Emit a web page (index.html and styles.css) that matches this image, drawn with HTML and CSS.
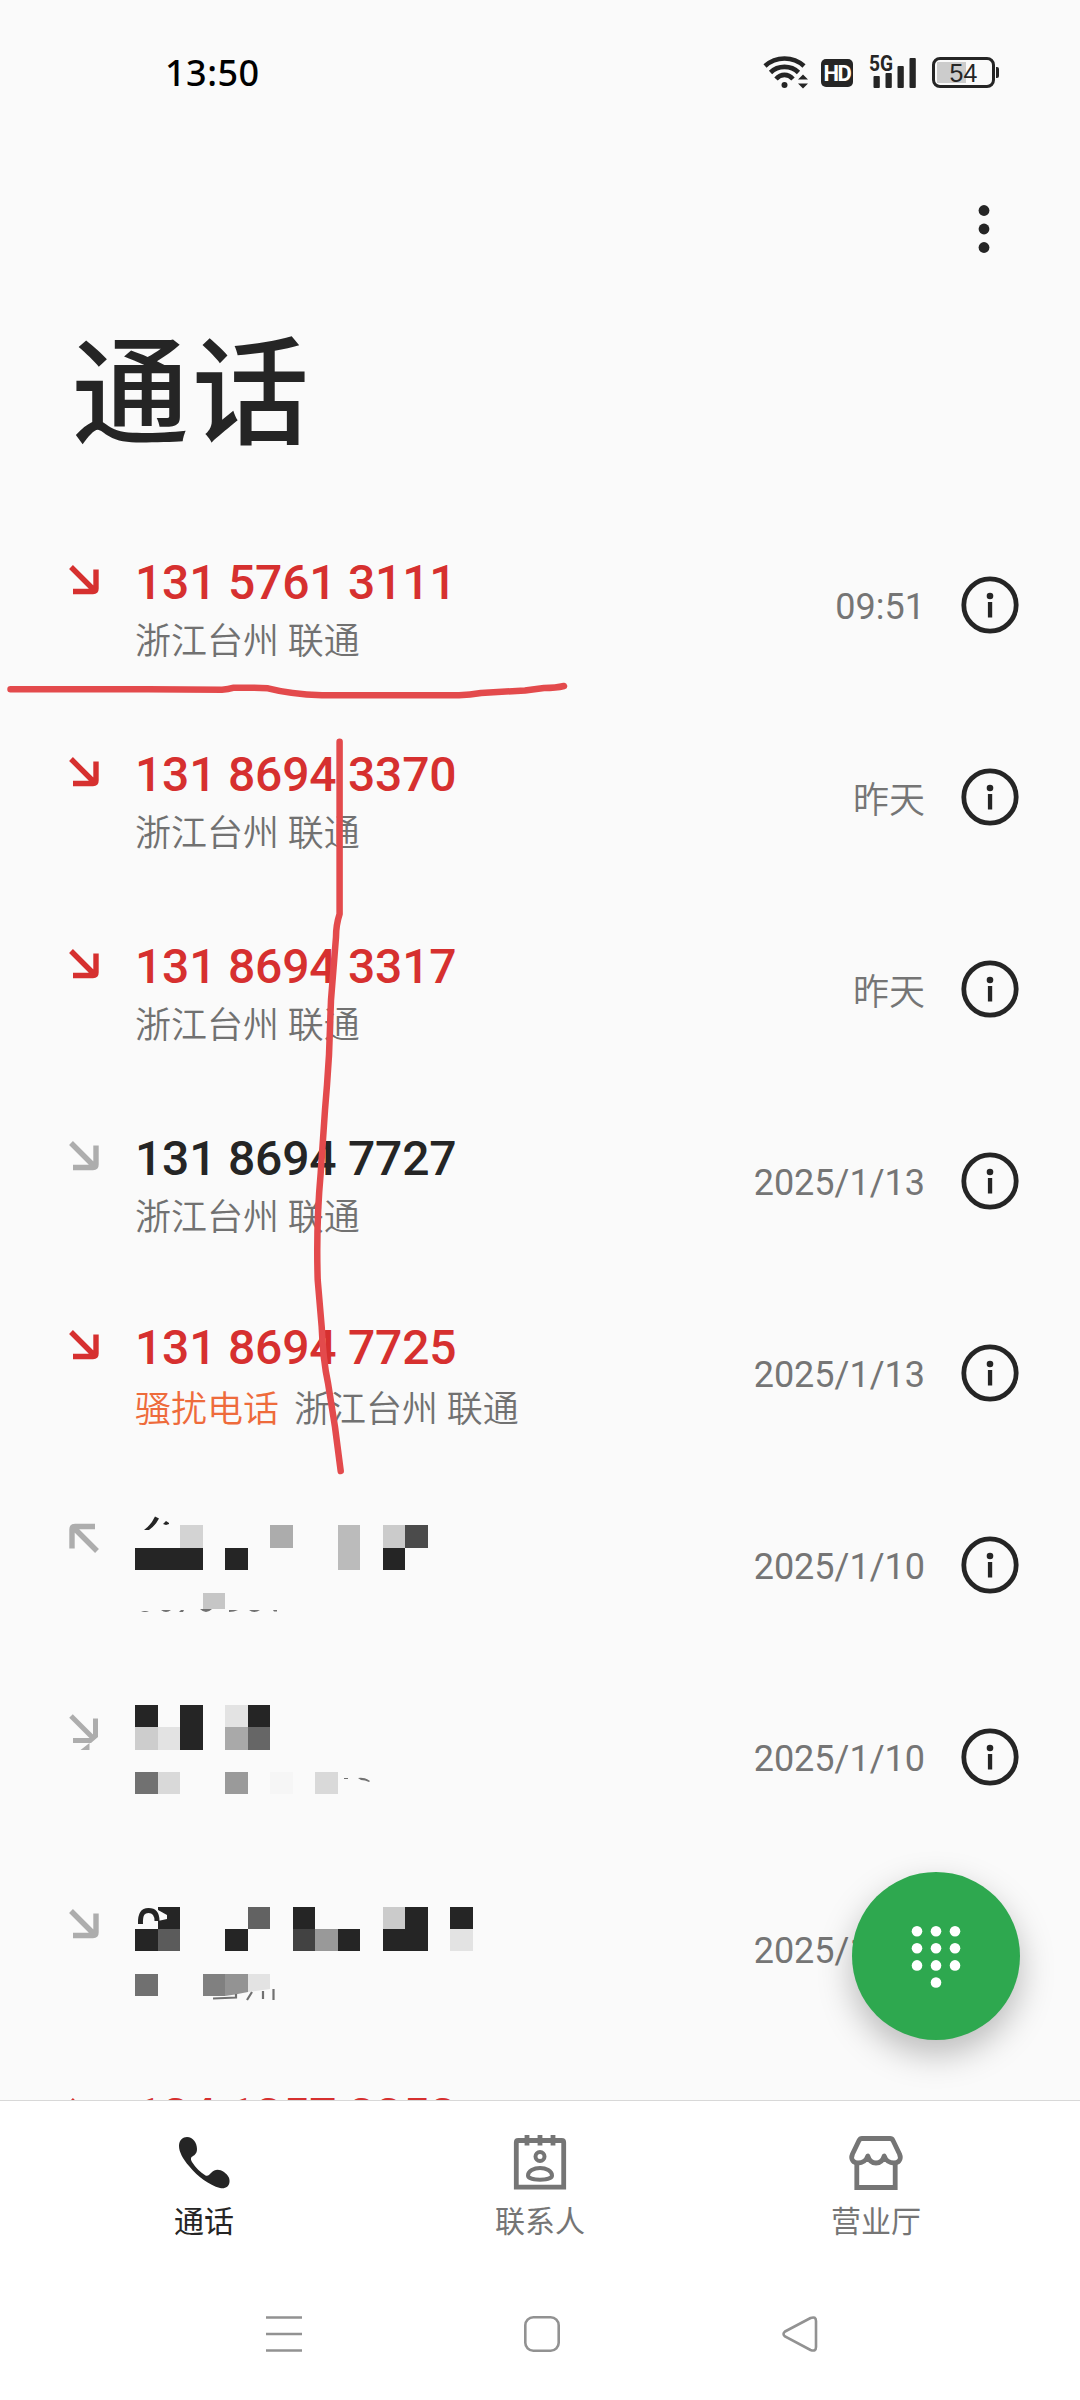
FILE: index.html
```html
<!DOCTYPE html>
<html lang="zh-CN">
<head>
    <meta charset="UTF-8">
    <meta name="viewport" content="width=device-width, initial-scale=1.0">
    <title>通话</title>
    <link rel="stylesheet" href="styles.css">
</head>
<body>
    <!-- shared icons -->
    <svg class="defs" width="0" height="0">
        <symbol id="arrow" viewBox="0 0 30 30">
            <path d="M2 2 L25 25 M4 26.5 H24 Q27 26.5 27 23.5 V4.5" fill="none" stroke="currentColor" stroke-width="5.4"/>
        </symbol>
        <symbol id="info" viewBox="0 0 58 58">
            <circle cx="29" cy="29" r="26.2" fill="none" stroke="currentColor" stroke-width="4.8"/>
            <circle cx="29" cy="20" r="3.3" fill="currentColor"/>
            <rect x="26.900" y="26" width="4.300" height="15.500" fill="currentColor"/>
        </symbol>
    </svg>

    <div class="status-bar">
        <span class="clock">13:50</span>
        <div class="status-icons">
            <svg class="wifi" width="46" height="36" viewBox="0 0 46 36" fill="none" stroke="#252525" stroke-width="4.6">
                <path d="M2 12 C13 2 30 2 41 12"/>
                <path d="M7.5 18.500 C15 11 28 11 35.5 18.500"/>
                <path d="M13 25 C18 19.500 25 19.500 30 25"/>
                <circle cx="21.5" cy="31" r="3" fill="#252525" stroke="none"/>
                <path d="M40 20.5 L45 25.5 H35 Z M40 34.5 L45 29.5 H35 Z" fill="#252525" stroke="none"/>
            </svg>
            <span class="hd">HD</span>
            <div class="signal">
                <span class="net">5G</span>
                <svg width="48" height="34" viewBox="0 0 48 34" fill="#252525">
                    <rect x="4.5" y="21" width="6.3" height="12" rx="1"/>
                    <rect x="16.5" y="18" width="6.3" height="15" rx="1"/>
                    <rect x="28.5" y="11" width="6.3" height="22" rx="1"/>
                    <rect x="40.5" y="3" width="6.3" height="30" rx="1"/>
                </svg>
            </div>
            <div class="battery"><span>54</span></div>
        </div>
    </div>

    <div class="toolbar">
        <svg width="12" height="50" viewBox="0 0 12 50" fill="#252525">
            <circle cx="6" cy="6.5" r="5.4"/>
            <circle cx="6" cy="25" r="5.4"/>
            <circle cx="6" cy="43.5" r="5.4"/>
        </svg>
    </div>

    <h1>通话</h1>

    <div class="call-list">
        <div class="call missed">
            <svg class="arrow"><use href="#arrow"/></svg>
            <div class="who">
                <div class="number">131 5761 3111</div>
                <div class="place">浙江台州 联通</div>
            </div>
            <span class="time">09:51</span>
            <svg class="info"><use href="#info"/></svg>
        </div>
        <div class="call missed">
            <svg class="arrow"><use href="#arrow"/></svg>
            <div class="who">
                <div class="number">131 8694 3370</div>
                <div class="place">浙江台州 联通</div>
            </div>
            <span class="time day">昨天</span>
            <svg class="info"><use href="#info"/></svg>
        </div>
        <div class="call missed">
            <svg class="arrow"><use href="#arrow"/></svg>
            <div class="who">
                <div class="number">131 8694 3317</div>
                <div class="place">浙江台州 联通</div>
            </div>
            <span class="time day">昨天</span>
            <svg class="info"><use href="#info"/></svg>
        </div>
        <div class="call">
            <svg class="arrow"><use href="#arrow"/></svg>
            <div class="who">
                <div class="number">131 8694 7727</div>
                <div class="place">浙江台州 联通</div>
            </div>
            <span class="time">2025/1/13</span>
            <svg class="info"><use href="#info"/></svg>
        </div>
        <div class="call missed tagged">
            <svg class="arrow"><use href="#arrow"/></svg>
            <div class="who">
                <div class="number">131 8694 7725</div>
                <div class="place"><span class="tag">骚扰电话</span>浙江台州 联通</div>
            </div>
            <span class="time">2025/1/13</span>
            <svg class="info"><use href="#info"/></svg>
        </div>

        <!-- hidden contacts -->
        <div class="call outgoing">
            <svg class="arrow"><use href="#arrow"/></svg>
            <svg class="mosaic" viewBox="0 0 350 192" fill="#252525" shape-rendering="crispEdges">
                <rect x="45" y="56" width="23" height="23" fill="#d3d3d3"/>
                <rect x="0" y="79" width="68" height="22"/>
                <rect x="90" y="79" width="23" height="22"/>
                <rect x="135" y="56" width="23" height="23" fill="#acacac"/>
                <rect x="203" y="56" width="22" height="45" fill="#bbb"/>
                <rect x="248" y="56" width="22" height="23" fill="#cbcbcb"/>
                <rect x="270" y="56" width="23" height="23" fill="#4b4b4b"/>
                <rect x="248" y="79" width="22" height="22"/>
                <rect x="68" y="124" width="22" height="16" fill="#c6c6c6"/>
                <g shape-rendering="auto">
                    <path d="M9 61 Q16 56 20 47.500 L24 49.500 Q20 57 14 61 Z M28 55 L31 52 L34 54 L34 55 L31 56 Z"/>
                    <path d="M6 142 Q10 144 14 142 Z M26 141 Q31 145 36 141 Z M44 143 L46 141 H49 L48 143 Z M65 140 H77 Q71 146 65 140 Z M94 141 H103 Q99 143 94 143 Z M114 141 H125 Q119 145 114 141 Z M138 141 H142 V142.500 H139 Z" fill="#717171"/>
                </g>
            </svg>
            <span class="time">2025/1/10</span>
            <svg class="info"><use href="#info"/></svg>
        </div>
        <div class="call tagged">
            <svg class="arrow torn" viewBox="0 0 30 38">
                <path d="M2 2 L24 24 M4 26.5 H22 M26.500 4.500 V22" fill="none" stroke="currentColor" stroke-width="5"/>
                <path d="M11.500 36 L20.500 29 V36 Z M18 29 H22 L29 23 V20 H24 Z" fill="currentColor"/>
            </svg>
            <svg class="mosaic" viewBox="0 0 350 192" fill="#252525" shape-rendering="crispEdges">
                <rect x="0" y="44" width="23" height="22"/>
                <rect x="45" y="44" width="23" height="45"/>
                <rect x="0" y="66" width="23" height="23" fill="#cdcdcd"/>
                <rect x="23" y="66" width="22" height="23" fill="#e3e3e3"/>
                <rect x="90" y="44" width="23" height="22" fill="#e3e3e3"/>
                <rect x="113" y="44" width="22" height="22"/>
                <rect x="90" y="66" width="23" height="23" fill="#a9a9a9"/>
                <rect x="113" y="66" width="22" height="23" fill="#666"/>
                <rect x="0" y="111" width="23" height="22" fill="#717171"/>
                <rect x="23" y="111" width="22" height="22" fill="#d9d9d9"/>
                <rect x="90" y="111" width="23" height="22" fill="#9a9a9a"/>
                <rect x="135" y="111" width="23" height="22" fill="#f6f6f6"/>
                <rect x="180" y="111" width="23" height="22" fill="#d9d9d9"/>
                <path d="M209 117 H213 V118 H209 Z M223 117 Q230 116 235 120 L234 121 Q230 119 226 119 Z" fill="#717171" shape-rendering="auto"/>
            </svg>
            <span class="time">2025/1/10</span>
            <svg class="info"><use href="#info"/></svg>
        </div>
        <div class="call">
            <svg class="arrow"><use href="#arrow"/></svg>
            <svg class="mosaic" viewBox="0 0 350 192" fill="#252525" shape-rendering="crispEdges">
                <rect x="23" y="54" width="22" height="22"/>
                <rect x="0" y="76" width="23" height="22"/>
                <rect x="23" y="76" width="22" height="22" fill="#5b5b5b"/>
                <rect x="113" y="54" width="22" height="22" fill="#626262"/>
                <rect x="90" y="76" width="23" height="22"/>
                <rect x="158" y="54" width="22" height="22"/>
                <rect x="158" y="76" width="22" height="22" fill="#424242"/>
                <rect x="180" y="76" width="23" height="22" fill="#999"/>
                <rect x="203" y="76" width="22" height="22"/>
                <rect x="248" y="54" width="22" height="22" fill="#cbcbcb"/>
                <rect x="270" y="54" width="23" height="22"/>
                <rect x="248" y="76" width="45" height="22"/>
                <rect x="315" y="54" width="23" height="22"/>
                <rect x="315" y="76" width="23" height="22" fill="#e3e3e3"/>
                <rect x="0" y="121" width="23" height="22" fill="#707070"/>
                <rect x="68" y="121" width="22" height="22" fill="#808080"/>
                <g shape-rendering="auto">
                    <path d="M23 57 L32 62 V66 L23 68 Z" fill="#fafafa"/>
                    <path d="M5.500 71 C5 61 8 57.500 13.500 57.500 C19 57.500 22 61 22 68" fill="none" stroke="#252525" stroke-width="5"/>
                    <path d="M90 121 H113 V139 L100 141.500 L90 143 Z" fill="#939393"/>
                    <path d="M113 121 H135 V136 L113 139 Z" fill="#e3e3e3"/>
                    <path d="M78 145.500 L101 144.500 V141 M117 139 L112 147 M128 138 V146 M138.500 136 V147" fill="none" stroke="#717171" stroke-width="2.200"/>
                </g>
            </svg>
            <span class="time">2025/1/10</span>
            <svg class="info"><use href="#info"/></svg>
        </div>
        <div class="call missed tagged">
            <svg class="arrow"><use href="#arrow"/></svg>
            <div class="who">
                <div class="number">134 1357 3353</div>
            </div>
        </div>
    </div>

    <div class="tabs">
        <div class="tab active">
            <svg width="60" height="60" viewBox="0 0 60 60" fill="currentColor">
                <path d="M5 13 C5 7 9 4 13 4 C19 4 23 10 23 16 C23 21 20 22.500 17.500 24 C16.500 26 17 27 18 29 C22 35 26 39 31.500 42.500 C34 43.500 35 42 37 40 C41 36 45 36 50 39 C54 42 56 45 55.500 49 C55 54 51 56 46 55 C35 52 24 44 15 33 C9 26 5 19 5 13 Z"/>
            </svg>
            <span>通话</span>
        </div>
        <div class="tab">
            <svg width="60" height="60" viewBox="0 0 60 60" fill="none" stroke="currentColor" stroke-width="4.800">
                <path d="M6.300 54.200 V9.500 Q6.300 7.500 8.300 7.500 H51.700 Q53.700 7.500 53.700 9.500 V54.200 Z"/>
                <path d="M17 2 V12.500 M30 2 V12.500 M43 2 V12.500"/>
                <circle cx="30" cy="23.500" r="4.500" stroke-width="4"/>
                <path d="M18 42.500 C18 38 24 35 30 35 C36 35 42 38 42 42.500 C42 48 18 48 18 42.500 Z" stroke-width="4"/>
            </svg>
            <span>联系人</span>
        </div>
        <div class="tab">
            <svg width="60" height="60" viewBox="0 0 60 60" fill="none" stroke="currentColor" stroke-width="4.800" stroke-linejoin="round">
                <path d="M16 5.500 H44 Q46 5.500 47 7.500 L53.500 21 C56 27 52 30 48 30 C43.500 30 39.500 27 38.200 23 C37 27 34 30 30 30 C26 30 23 27 21.800 23 C20.500 27 16.500 30 12 30 C8 30 4 27 6.500 21 L13 7.500 Q14 5.500 16 5.500 Z"/>
                <path d="M10.800 29 V54.500 H49.200 V29" stroke-linejoin="miter"/>
            </svg>
            <span>营业厅</span>
        </div>
    </div>

    <div class="system-nav">
        <svg viewBox="0 0 36 36"><path d="M0 1.500 H36 M0 18 H36 M0 34.500 H36"/></svg>
        <svg viewBox="0 0 36 36"><rect x="1.300" y="1.300" width="33.400" height="33.400" rx="8"/></svg>
        <svg viewBox="0 0 36 36"><path d="M3 15.500 L28.500 2 Q34 0 34 5 V31 Q34 36 28.500 34 L3 20.500 Q0 18 3 15.500 Z"/></svg>
    </div>

    <div class="fab">
        <svg width="60" height="70" viewBox="0 0 60 70" fill="#fff">
            <circle cx="11" cy="10.300" r="5.300"/><circle cx="30" cy="10.300" r="5.300"/><circle cx="49" cy="10.300" r="5.300"/>
            <circle cx="11" cy="27.300" r="5.300"/><circle cx="30" cy="27.300" r="5.300"/><circle cx="49" cy="27.300" r="5.300"/>
            <circle cx="11" cy="44.400" r="5.300"/><circle cx="30" cy="44.400" r="5.300"/><circle cx="49" cy="44.400" r="5.300"/>
            <circle cx="30" cy="61.500" r="5.300"/>
        </svg>
    </div>

    <!-- pen marks over the list -->
    <svg class="marks" width="1080" height="2400" viewBox="0 0 1080 2400">
        <path d="M10.500 689.300 H148 L222 689.700 Q228 689.500 234 687.700 H252 L268 688.300 Q290 694 322 695.300 H459 Q470 695 481 693 L525 690.500 L544 688 Q556 688 564 686"/>
        <path d="M339.600 741.700 V914 Q336 925 336 937 L331 1000 L329 1055 L327 1085 L325 1110 L320.700 1173 Q316 1225 317.700 1280 L321.700 1327 Q323 1360 328 1383 L335 1427 L340.700 1471"/>
    </svg>
</body>
</html>
```

FILE: styles.css
```css
* {
    margin: 0;
    padding: 0;
    box-sizing: border-box;
}

body {
    width: 1080px;
    height: 2400px;
    position: relative;
    display: flex;
    flex-direction: column;
    overflow: hidden;
    background-color: #fafafa;
    color: #252525;
    font-family: Roboto, "Noto Sans CJK SC", sans-serif;
}

svg {
    display: block;
    flex-shrink: 0;
}

.defs {
    position: absolute;
}

.status-bar {
    height: 144px;
    padding: 0 80px 0 165px;
    display: flex;
    justify-content: space-between;
    align-items: center;
}

.clock {
    font-family: "Noto Sans", sans-serif;
    font-size: 36px;
    font-weight: 500;
    letter-spacing: 0.5px;
    color: #000;
}

.status-icons {
    display: flex;
    align-items: center;
}

.wifi {
    margin-right: 12px;
}

.hd {
    width: 32px;
    height: 28px;
    margin: 2px 16px 0 0;
    border-radius: 5px;
    background-color: #252525;
    color: #fff;
    font-size: 22px;
    font-weight: 700;
    line-height: 29px;
    display: flex;
    justify-content: center;
    letter-spacing: -1.5px;
}

.signal {
    position: relative;
    margin-right: 15px;
}

.net {
    position: absolute;
    left: 0;
    top: -1px;
    font-size: 22px;
    font-weight: 700;
    line-height: 20px;
    transform: scaleX(0.87);
    transform-origin: left;
}

.battery {
    position: relative;
    width: 63px;
    height: 31px;
    margin-right: 5px;
    border: 3px solid #252525;
    border-radius: 8px;
    background: linear-gradient(#ccc, #ccc) 2px 2px / 29px 21px no-repeat;
    font-family: "Liberation Sans", sans-serif;
    font-size: 25px;
    line-height: 26px;
    text-align: center;
}

.battery::after {
    content: "";
    position: absolute;
    right: -7px;
    top: 7px;
    width: 3px;
    height: 11px;
    border-radius: 0 2px 2px 0;
    background-color: #252525;
}

.toolbar {
    height: 176px;
    padding: 60px 90px 0 0;
    display: flex;
    justify-content: flex-end;
}

h1 {
    height: 189px;
    padding-left: 72px;
    font-size: 117px;
    font-weight: 500;
    line-height: 150px;
    letter-spacing: 3px;
}

.call-list {
    height: 1591px;
    overflow: hidden;
}

.call {
    height: 192px;
    padding: 0 61px 0 69px;
    display: flex;
    align-items: center;
}

.arrow {
    width: 30px;
    height: 30px;
    align-self: flex-start;
    margin: 56px 36px 0 0;
    color: #adadad;
}

.arrow.torn {
    height: 38px;
}

.outgoing .arrow {
    transform: rotate(180deg);
    margin-top: 54px;
}

.missed .arrow,
.missed .number {
    color: #d6302f;
}

.who {
    flex: 1;
    align-self: flex-start;
    padding-top: 44px;
}

.number {
    height: 65px;
    font-size: 48px;
    font-weight: 500;
    line-height: 60px;
    letter-spacing: -0.2px;
}

.place {
    font-size: 36px;
    font-weight: 350;
    line-height: 48px;
    color: #717171;
}

.tag {
    margin-right: 15px;
    color: #ee6b3b;
}

.tagged .arrow {
    margin-top: 53px;
}

.tagged .who {
    padding-top: 41px;
}

.tagged .number {
    height: 68px;
}

.mosaic {
    width: 350px;
    height: 192px;
    margin: 0 auto 0 0;
}

.time {
    margin-right: 36px;
    padding-top: 3px;
    font-size: 36px;
    color: #757575;
}

.day {
    padding-top: 0;
    font-weight: 350;
}

.info {
    width: 58px;
    height: 58px;
}

.tabs {
    height: 170px;
    padding: 32px 36px 0;
    display: flex;
    border-top: 1px solid #d8d8d8;
    background-color: #fff;
}

.tab {
    flex: 1;
    display: flex;
    flex-direction: column;
    align-items: center;
    font-size: 30px;
    line-height: 40px;
    color: #757575;
}

.tab span {
    margin-top: 9px;
}

.tab.active {
    color: #252525;
}

.system-nav {
    flex: 1;
    padding: 46px 151px 0 155px;
    display: flex;
    justify-content: space-around;
    background-color: #fff;
}

.system-nav svg {
    width: 36px;
    height: 36px;
    fill: none;
    stroke: #929292;
    stroke-width: 2.6;
}

.fab {
    position: absolute;
    left: 852px;
    top: 1872px;
    width: 168px;
    height: 168px;
    display: flex;
    justify-content: center;
    padding-top: 49px;
    border-radius: 50%;
    background-color: #2ea84f;
    box-shadow: 0 14px 34px rgba(0, 0, 0, 0.26);
}

.marks {
    position: absolute;
    left: 0;
    top: 0;
    fill: none;
    stroke: #e34a4c;
    stroke-width: 6.5;
    stroke-linecap: round;
    stroke-linejoin: round;
}
```
